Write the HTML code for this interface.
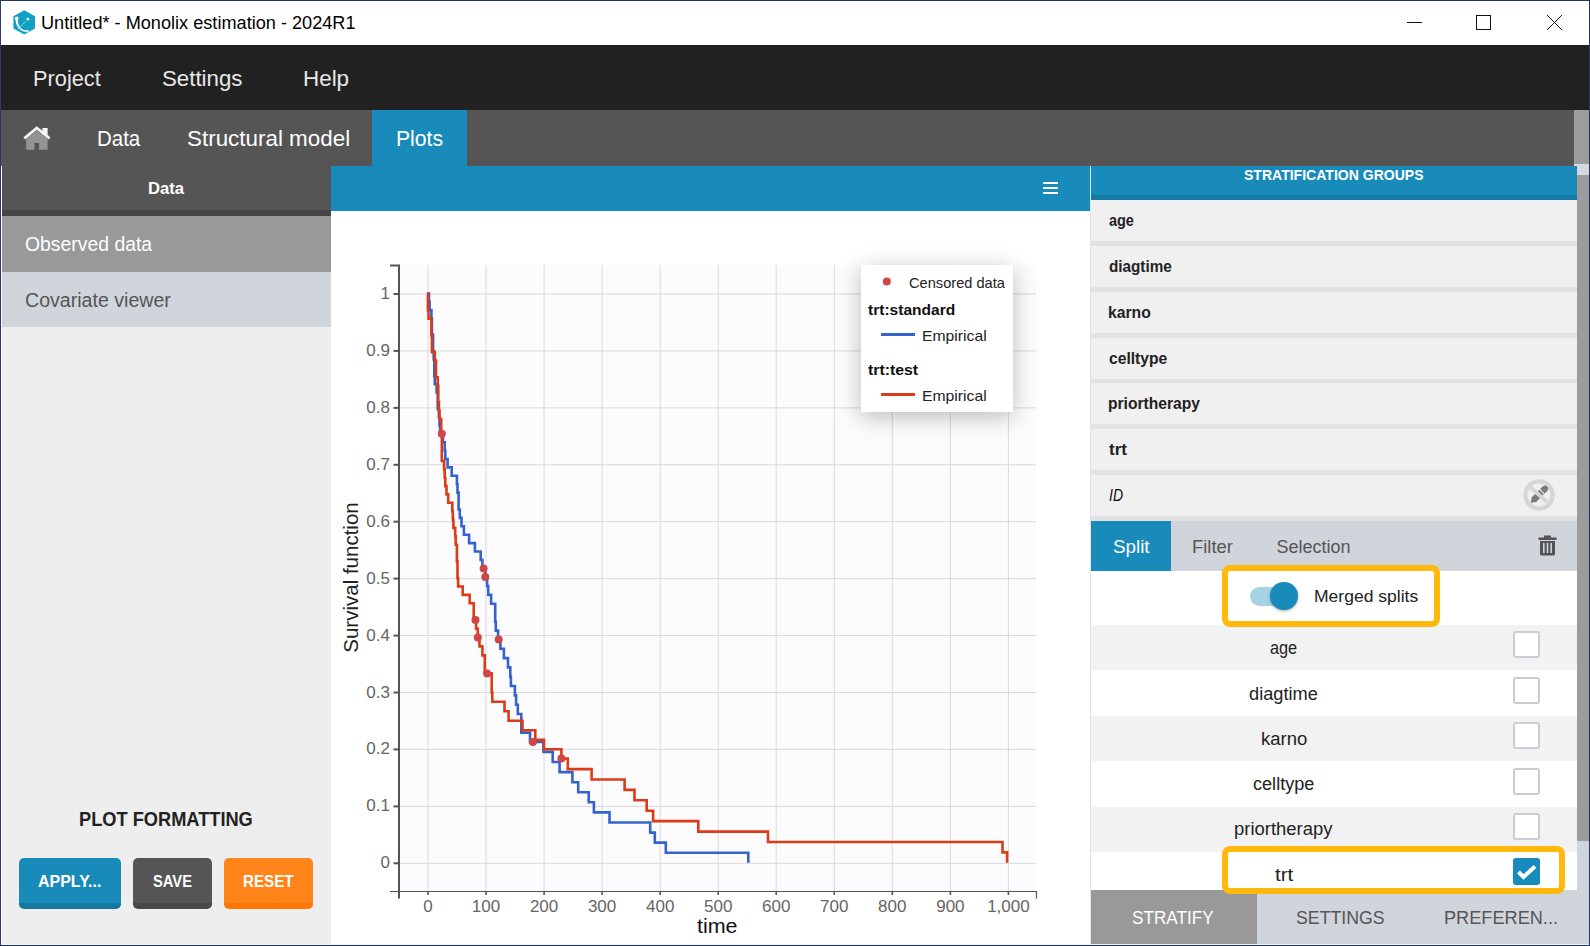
<!DOCTYPE html>
<html><head><meta charset="utf-8">
<style>
*{box-sizing:border-box}
html,body{margin:0;padding:0}
body{width:1590px;height:946px;position:relative;overflow:hidden;background:#fff;font-family:"Liberation Sans",sans-serif}
.a{position:absolute}
.t{position:absolute;white-space:nowrap;transform-origin:0 0;line-height:1}
</style></head>
<body>
<div class="a" style="left:0;top:0;width:1590px;height:1px;background:#22346a"></div>
<div class="a" style="left:0;top:0;width:1px;height:946px;background:#2a3a6a"></div>
<div class="a" style="left:1589px;top:0;width:1px;height:946px;background:#1f3468"></div>
<div class="a" style="left:0;top:945px;width:1590px;height:1px;background:#1f3468"></div>
<div class="a" style="left:1px;top:1px;width:1588px;height:44px;background:#fff"></div>
<svg class="a" style="left:13px;top:10px" width="23" height="25" viewBox="0 0 23 25">
<polygon points="11.2,0.2 22,6.3 22,18.5 11.2,24.6 0.4,18.5 0.4,6.3" fill="#0fa0c4"/>
<path d="M3.6,9.5 C3.9,14 5.5,17.5 8.5,19.7 C10.5,21 13,21.3 15.3,20.9" stroke="#fff" stroke-width="1.5" fill="none" stroke-linecap="round"/>
<path d="M2.6,9 C2.6,12 3.4,14.5 4.6,16.5 L6,15.6 C4.9,13.4 4.6,11 4.8,8.6 Z" fill="#fff"/>
<circle cx="3.7" cy="8.4" r="1.9" fill="#fff"/>
<path d="M4.8,18.9 L13,11.3" stroke="#fff" stroke-width="0.7" stroke-dasharray="1.6,0.6"/>
<circle cx="14.9" cy="9.1" r="1.4" fill="#fff"/>
</svg>
<div class="t" style="left:40.96px;top:14.99px;font-size:17.5px;font-weight:normal;font-style:normal;color:#000;transform:scaleX(1.0364);">Untitled* - Monolix estimation - 2024R1</div>
<div class="a" style="left:1407px;top:22px;width:15px;height:1px;background:#111"></div>
<div class="a" style="left:1476px;top:15px;width:15px;height:15px;border:1px solid #111"></div>
<svg class="a" style="left:1546px;top:14px" width="17" height="17" viewBox="0 0 17 17"><path d="M1,1L16,16M16,1L1,16" stroke="#111" stroke-width="1"/></svg>
<div class="a" style="left:1px;top:45px;width:1588px;height:65px;background:#212121"></div>
<div class="t" style="left:32.71px;top:67.58px;font-size:22px;font-weight:normal;font-style:normal;color:#e8e8e8;transform:scaleX(0.9897);">Project</div>
<div class="t" style="left:161.69px;top:67.58px;font-size:22px;font-weight:normal;font-style:normal;color:#e8e8e8;transform:scaleX(1.0115);">Settings</div>
<div class="t" style="left:302.58px;top:67.58px;font-size:22px;font-weight:normal;font-style:normal;color:#e8e8e8;transform:scaleX(1.0182);">Help</div>
<div class="a" style="left:1px;top:110px;width:1573px;height:56px;background:#555"></div>
<div class="a" style="left:1574px;top:110px;width:15px;height:56px;background:#9c9c9c"></div>
<svg class="a" style="left:15px;top:118px" width="45" height="40" viewBox="0 0 45 40">
<path d="M11.2,21 L21.8,12.3 L32.6,21 L32.6,31.7 L24.1,31.7 L24.1,25.1 L19.4,25.1 L19.4,31.7 L11.2,31.7 Z" fill="#939393"/>
<rect x="27.4" y="10" width="5.2" height="7" fill="#f4f4f4"/>
<path d="M9.3,20.4 L21.8,9.9 L34.6,20.4" stroke="#f4f4f4" stroke-width="2.7" fill="none"/>
</svg>
<div class="t" style="left:96.67px;top:128.38px;font-size:22px;font-weight:normal;font-style:normal;color:#fff;transform:scaleX(0.9304);">Data</div>
<div class="t" style="left:187.08px;top:128.38px;font-size:22px;font-weight:normal;font-style:normal;color:#fff;transform:scaleX(1.0184);">Structural model</div>
<div class="a" style="left:372px;top:110px;width:95px;height:56px;background:#188bba"></div>
<div class="t" style="left:395.84px;top:128.38px;font-size:22px;font-weight:normal;font-style:normal;color:#fff;transform:scaleX(0.9625);">Plots</div>
<div class="a" style="left:1px;top:166px;width:330px;height:779px;background:#eee"></div>
<div class="a" style="left:1px;top:166px;width:330px;height:44px;background:#555"></div>
<div class="a" style="left:1px;top:210px;width:330px;height:6px;background:#454545"></div>
<div class="t" style="left:147.62px;top:179.81px;font-size:17px;font-weight:bold;font-style:normal;color:#fff;transform:scaleX(0.9806);">Data</div>
<div class="a" style="left:1px;top:216px;width:330px;height:56px;background:#999"></div>
<div class="t" style="left:24.55px;top:233.65px;font-size:20.5px;font-weight:normal;font-style:normal;color:#fff;transform:scaleX(0.9455);">Observed data</div>
<div class="a" style="left:1px;top:272px;width:330px;height:55px;background:#d0d4db"></div>
<div class="t" style="left:24.52px;top:290.17px;font-size:20px;font-weight:normal;font-style:normal;color:#555;transform:scaleX(0.9791);">Covariate viewer</div>
<div class="t" style="left:79.08px;top:809.54px;font-size:19.8px;font-weight:bold;font-style:normal;color:#222;transform:scaleX(0.9214);">PLOT FORMATTING</div>
<div class="a" style="left:19px;top:858px;width:102px;height:51px;border-radius:5px;background:#188bba;border-bottom:6px solid #1478a0"></div>
<div class="t" style="left:37.90px;top:872.61px;font-size:17px;font-weight:bold;font-style:normal;color:#fff;transform:scaleX(0.9403);">APPLY...</div>
<div class="a" style="left:133px;top:858px;width:79px;height:51px;border-radius:5px;background:#555;border-bottom:6px solid #484848"></div>
<div class="t" style="left:152.70px;top:872.61px;font-size:17px;font-weight:bold;font-style:normal;color:#fff;transform:scaleX(0.8667);">SAVE</div>
<div class="a" style="left:224px;top:858px;width:89px;height:51px;border-radius:5px;background:#ff851b;border-bottom:6px solid #ff7605"></div>
<div class="t" style="left:243.01px;top:872.61px;font-size:17px;font-weight:bold;font-style:normal;color:#fff;transform:scaleX(0.8929);">RESET</div>
<div class="a" style="left:331px;top:166px;width:759px;height:45px;background:#188bba"></div>
<div class="a" style="left:1090px;top:166px;width:1px;height:779px;background:#dfe3ea"></div>
<div class="a" style="left:1043px;top:182px;width:15px;height:2px;background:#fff"></div>
<div class="a" style="left:1043px;top:187px;width:15px;height:2px;background:#fff"></div>
<div class="a" style="left:1043px;top:192px;width:15px;height:2px;background:#fff"></div>
<svg class="a" style="left:0;top:0" width="1590" height="946" viewBox="0 0 1590 946" font-family="Liberation Sans">
<rect x="400" y="265" width="636" height="626" fill="#fcfcfe"/>
<line x1="400" x2="1036" y1="863.3" y2="863.3" stroke="#d9d9dc" stroke-width="1"/>
<line x1="400" x2="1036" y1="806.4" y2="806.4" stroke="#d9d9dc" stroke-width="1"/>
<line x1="400" x2="1036" y1="749.4" y2="749.4" stroke="#d9d9dc" stroke-width="1"/>
<line x1="400" x2="1036" y1="692.5" y2="692.5" stroke="#d9d9dc" stroke-width="1"/>
<line x1="400" x2="1036" y1="635.6" y2="635.6" stroke="#d9d9dc" stroke-width="1"/>
<line x1="400" x2="1036" y1="578.6" y2="578.6" stroke="#d9d9dc" stroke-width="1"/>
<line x1="400" x2="1036" y1="521.7" y2="521.7" stroke="#d9d9dc" stroke-width="1"/>
<line x1="400" x2="1036" y1="464.8" y2="464.8" stroke="#d9d9dc" stroke-width="1"/>
<line x1="400" x2="1036" y1="407.9" y2="407.9" stroke="#d9d9dc" stroke-width="1"/>
<line x1="400" x2="1036" y1="350.9" y2="350.9" stroke="#d9d9dc" stroke-width="1"/>
<line x1="400" x2="1036" y1="294.0" y2="294.0" stroke="#d9d9dc" stroke-width="1"/>
<line x1="428.0" x2="428.0" y1="265" y2="891" stroke="#d9d9dc" stroke-width="1"/>
<line x1="486.0" x2="486.0" y1="265" y2="891" stroke="#d9d9dc" stroke-width="1"/>
<line x1="544.1" x2="544.1" y1="265" y2="891" stroke="#d9d9dc" stroke-width="1"/>
<line x1="602.1" x2="602.1" y1="265" y2="891" stroke="#d9d9dc" stroke-width="1"/>
<line x1="660.2" x2="660.2" y1="265" y2="891" stroke="#d9d9dc" stroke-width="1"/>
<line x1="718.2" x2="718.2" y1="265" y2="891" stroke="#d9d9dc" stroke-width="1"/>
<line x1="776.2" x2="776.2" y1="265" y2="891" stroke="#d9d9dc" stroke-width="1"/>
<line x1="834.3" x2="834.3" y1="265" y2="891" stroke="#d9d9dc" stroke-width="1"/>
<line x1="892.3" x2="892.3" y1="265" y2="891" stroke="#d9d9dc" stroke-width="1"/>
<line x1="950.4" x2="950.4" y1="265" y2="891" stroke="#d9d9dc" stroke-width="1"/>
<line x1="1008.4" x2="1008.4" y1="265" y2="891" stroke="#d9d9dc" stroke-width="1"/>
<path d="M390,265.5H399V898.5" stroke="#555" stroke-width="2" fill="none"/>
<path d="M390,891.5H1036.5V898.5" stroke="#555" stroke-width="1.2" fill="none"/>
<line x1="393.5" x2="399" y1="863.3" y2="863.3" stroke="#555" stroke-width="2"/>
<line x1="393.5" x2="399" y1="806.4" y2="806.4" stroke="#555" stroke-width="2"/>
<line x1="393.5" x2="399" y1="749.4" y2="749.4" stroke="#555" stroke-width="2"/>
<line x1="393.5" x2="399" y1="692.5" y2="692.5" stroke="#555" stroke-width="2"/>
<line x1="393.5" x2="399" y1="635.6" y2="635.6" stroke="#555" stroke-width="2"/>
<line x1="393.5" x2="399" y1="578.6" y2="578.6" stroke="#555" stroke-width="2"/>
<line x1="393.5" x2="399" y1="521.7" y2="521.7" stroke="#555" stroke-width="2"/>
<line x1="393.5" x2="399" y1="464.8" y2="464.8" stroke="#555" stroke-width="2"/>
<line x1="393.5" x2="399" y1="407.9" y2="407.9" stroke="#555" stroke-width="2"/>
<line x1="393.5" x2="399" y1="350.9" y2="350.9" stroke="#555" stroke-width="2"/>
<line x1="393.5" x2="399" y1="294.0" y2="294.0" stroke="#555" stroke-width="2"/>
<line x1="428.0" x2="428.0" y1="891" y2="895" stroke="#555" stroke-width="1.6"/>
<line x1="486.0" x2="486.0" y1="891" y2="895" stroke="#555" stroke-width="1.6"/>
<line x1="544.1" x2="544.1" y1="891" y2="895" stroke="#555" stroke-width="1.6"/>
<line x1="602.1" x2="602.1" y1="891" y2="895" stroke="#555" stroke-width="1.6"/>
<line x1="660.2" x2="660.2" y1="891" y2="895" stroke="#555" stroke-width="1.6"/>
<line x1="718.2" x2="718.2" y1="891" y2="895" stroke="#555" stroke-width="1.6"/>
<line x1="776.2" x2="776.2" y1="891" y2="895" stroke="#555" stroke-width="1.6"/>
<line x1="834.3" x2="834.3" y1="891" y2="895" stroke="#555" stroke-width="1.6"/>
<line x1="892.3" x2="892.3" y1="891" y2="895" stroke="#555" stroke-width="1.6"/>
<line x1="950.4" x2="950.4" y1="891" y2="895" stroke="#555" stroke-width="1.6"/>
<line x1="1008.4" x2="1008.4" y1="891" y2="895" stroke="#555" stroke-width="1.6"/>
<path d="M427.3,293.5H429.0V301.8H429.6V310.0H431.4V318.3H431.9V334.8H433.1V351.3H433.7V359.5H434.3V376.0H434.8V384.3H436.6V392.5H437.7V409.0H438.9V417.3H439.5V425.5H440.1V433.8H443.0V442.2H444.7V450.6H445.3V459.0H447.6V467.4H451.7V475.8H456.9V484.2H457.5V492.6H458.6V509.5H459.8V517.9H461.5V526.3H463.9V534.7H469.1V543.1H474.9V551.5H480.7V559.9H482.4V568.4H485.3V577.0H487.1V586.0H488.2V594.9H491.1V603.8H495.2V621.7H495.8V630.6H498.1V639.5H500.4V648.8H503.9V658.1H508.0V667.4H510.3V676.7H510.9V686.0H514.9V695.4H516.1V704.7H517.8V714.0H521.3V732.6H530.0V741.9H543.4V751.9H552.7V762.0H559.6V772.1H572.4V782.2H578.2V792.3H588.7V802.3H593.9V812.4H609.5V822.5H650.2V832.6H654.8V842.6H665.8V852.7H748.3V862.8" stroke="#3562cf" stroke-width="2.6" fill="none"/>
<path d="M427.3,293.5H427.9V310.2H428.5V318.6H431.4V335.4H431.9V352.1H434.8V360.5H436.0V377.2H437.7V385.6H438.3V402.3H438.9V410.7H439.5V419.1H441.2V435.8H441.8V460.9H444.1V469.3H444.7V477.7H445.3V486.1H446.5V494.4H448.2V502.8H452.3V511.2H452.8V519.5H453.4V527.9H455.2V536.3H455.7V544.7H456.9V561.4H457.5V578.1H458.1V586.5H462.7V594.9H469.7V603.3H473.7V620.0H476.1V628.7H477.8V637.4H479.5V646.4H482.4V655.4H484.8V673.4H491.7V692.4H492.3V701.8H504.5V711.3H508.6V720.8H522.5V730.2H535.3V739.7H544.0V749.2H561.4V758.6H567.8V769.1H591.6V779.5H624.6V789.9H634.5V800.3H646.7V810.7H653.1V821.1H698.3V831.6H768.0V842.0H1002.5V852.4H1007.1V862.8" stroke="#dc3b16" stroke-width="2.6" fill="none"/>
<circle cx="441.8" cy="433.8" r="4" fill="#d04545"/>
<circle cx="483.6" cy="568.4" r="4" fill="#d04545"/>
<circle cx="485.3" cy="577.0" r="4" fill="#d04545"/>
<circle cx="498.7" cy="639.5" r="4" fill="#d04545"/>
<circle cx="532.9" cy="741.9" r="4" fill="#d04545"/>
<circle cx="475.5" cy="620.0" r="4" fill="#d04545"/>
<circle cx="477.8" cy="637.4" r="4" fill="#d04545"/>
<circle cx="487.1" cy="673.4" r="4" fill="#d04545"/>
<circle cx="561.4" cy="758.6" r="4" fill="#d04545"/>
<text x="390" y="868.3" text-anchor="end" font-size="17" fill="#666">0</text>
<text x="390" y="811.4" text-anchor="end" font-size="17" fill="#666">0.1</text>
<text x="390" y="754.4" text-anchor="end" font-size="17" fill="#666">0.2</text>
<text x="390" y="697.5" text-anchor="end" font-size="17" fill="#666">0.3</text>
<text x="390" y="640.6" text-anchor="end" font-size="17" fill="#666">0.4</text>
<text x="390" y="583.6" text-anchor="end" font-size="17" fill="#666">0.5</text>
<text x="390" y="526.7" text-anchor="end" font-size="17" fill="#666">0.6</text>
<text x="390" y="469.8" text-anchor="end" font-size="17" fill="#666">0.7</text>
<text x="390" y="412.9" text-anchor="end" font-size="17" fill="#666">0.8</text>
<text x="390" y="355.9" text-anchor="end" font-size="17" fill="#666">0.9</text>
<text x="390" y="299.0" text-anchor="end" font-size="17" fill="#666">1</text>
<text x="428.0" y="911.5" text-anchor="middle" font-size="17" fill="#666">0</text>
<text x="486.0" y="911.5" text-anchor="middle" font-size="17" fill="#666">100</text>
<text x="544.1" y="911.5" text-anchor="middle" font-size="17" fill="#666">200</text>
<text x="602.1" y="911.5" text-anchor="middle" font-size="17" fill="#666">300</text>
<text x="660.2" y="911.5" text-anchor="middle" font-size="17" fill="#666">400</text>
<text x="718.2" y="911.5" text-anchor="middle" font-size="17" fill="#666">500</text>
<text x="776.2" y="911.5" text-anchor="middle" font-size="17" fill="#666">600</text>
<text x="834.3" y="911.5" text-anchor="middle" font-size="17" fill="#666">700</text>
<text x="892.3" y="911.5" text-anchor="middle" font-size="17" fill="#666">800</text>
<text x="950.4" y="911.5" text-anchor="middle" font-size="17" fill="#666">900</text>
<text x="1008.4" y="911.5" text-anchor="middle" font-size="17" fill="#666">1,000</text>
<text transform="translate(357.5,577.5) rotate(-90)" x="0" y="0" text-anchor="middle" font-size="20.5" fill="#222">Survival function</text>
</svg>
<div class="a" style="left:861px;top:265px;width:152px;height:147px;background:#fff;box-shadow:0 5px 22px rgba(0,0,0,0.26)"></div>
<svg class="a" style="left:880px;top:276px" width="12" height="12"><circle cx="6.8" cy="5.4" r="4" fill="#d04545"/></svg>
<div class="t" style="left:908.90px;top:274.90px;font-size:15px;font-weight:normal;font-style:normal;color:#222;transform:scaleX(0.9747);">Censored data</div>
<div class="t" style="left:868.00px;top:301.90px;font-size:15px;font-weight:bold;font-style:normal;color:#111;transform:scaleX(1.0357);">trt:standard</div>
<div class="a" style="left:881px;top:333px;width:34px;height:3px;background:#3562cf"></div>
<div class="t" style="left:921.65px;top:327.60px;font-size:15px;font-weight:normal;font-style:normal;color:#222;transform:scaleX(1.0483);">Empirical</div>
<div class="t" style="left:868.00px;top:362.10px;font-size:15px;font-weight:bold;font-style:normal;color:#111;transform:scaleX(1.0542);">trt:test</div>
<div class="a" style="left:881px;top:393px;width:34px;height:3px;background:#dc3b16"></div>
<div class="t" style="left:921.65px;top:387.60px;font-size:15px;font-weight:normal;font-style:normal;color:#222;transform:scaleX(1.0483);">Empirical</div>
<div class="t" style="left:697.40px;top:915.65px;font-size:20.5px;font-weight:normal;font-style:normal;color:#111;transform:scaleX(1.0474);">time</div>
<div class="a" style="left:1091px;top:200px;width:486px;height:321px;background:#e2e2e2"></div>
<div class="a" style="left:1091px;top:200.0px;width:486px;height:41px;background:#f0f0f0"></div>
<div class="a" style="left:1091px;top:245.8px;width:486px;height:41px;background:#f0f0f0"></div>
<div class="a" style="left:1091px;top:291.7px;width:486px;height:41px;background:#f0f0f0"></div>
<div class="a" style="left:1091px;top:337.5px;width:486px;height:41px;background:#f0f0f0"></div>
<div class="a" style="left:1091px;top:383.3px;width:486px;height:41px;background:#f0f0f0"></div>
<div class="a" style="left:1091px;top:429.1px;width:486px;height:41px;background:#f0f0f0"></div>
<div class="a" style="left:1091px;top:475.0px;width:486px;height:41px;background:#f0f0f0"></div>
<div class="t" style="left:1109.30px;top:212.96px;font-size:16px;font-weight:bold;font-style:normal;color:#222;transform:scaleX(0.9037);">age</div>
<div class="t" style="left:1109.30px;top:258.96px;font-size:16px;font-weight:bold;font-style:normal;color:#222;transform:scaleX(0.9530);">diagtime</div>
<div class="t" style="left:1108.32px;top:305.16px;font-size:16px;font-weight:bold;font-style:normal;color:#222;transform:scaleX(0.9833);">karno</div>
<div class="t" style="left:1109.30px;top:350.76px;font-size:16px;font-weight:bold;font-style:normal;color:#222;transform:scaleX(0.9774);">celltype</div>
<div class="t" style="left:1108.32px;top:396.06px;font-size:16px;font-weight:bold;font-style:normal;color:#222;transform:scaleX(0.9763);">priortherapy</div>
<div class="t" style="left:1109.30px;top:442.06px;font-size:16px;font-weight:bold;font-style:normal;color:#222;transform:scaleX(1.0706);">trt</div>
<div class="t" style="left:1109.30px;top:487.61px;font-size:15.7px;font-weight:normal;font-style:italic;color:#111;transform:scaleX(0.8933);">ID</div>
<svg class="a" style="left:1522px;top:478px" width="34" height="34" viewBox="0 0 34 34">
<circle cx="17" cy="17" r="13.6" fill="none" stroke="#d6d6d6" stroke-width="4.4"/>
<path d="M8.8,24.8 L9.72,19.36 L20.68,8.4 A3.2,3.2 0 0 1 25.2,12.92 L14.24,23.88 Z" fill="#7b7b7b"/>
<path d="M17.0,10.7 L22.9,16.6" stroke="#f0f0f0" stroke-width="1.2"/>
<path d="M7.6,8.4 L25,24" stroke="#d6d6d6" stroke-width="4"/>
</svg>
<div class="a" style="left:1091px;top:166px;width:486px;height:34px;background:#188bba"></div>
<div class="a" style="left:1091px;top:195px;width:486px;height:5px;background:#147aa6"></div>
<div class="t" style="left:1244.40px;top:167.26px;font-size:15.4px;font-weight:bold;font-style:normal;color:#fff;transform:scaleX(0.9117);">STRATIFICATION GROUPS</div>
<div class="a" style="left:1574px;top:164px;width:15px;height:11px;background:#d5d8de"></div>
<div class="a" style="left:1574px;top:166px;width:3px;height:9px;background:#188bba"></div>
<div class="a" style="left:1577px;top:175px;width:12px;height:666px;background:#9c9c9c"></div>
<div class="a" style="left:1577px;top:841px;width:12px;height:104px;background:#d0d4db"></div>
<div class="a" style="left:1091px;top:521px;width:486px;height:50px;background:#d0d4db"></div>
<div class="a" style="left:1091px;top:521px;width:80px;height:50px;background:#188bba"></div>
<div class="t" style="left:1112.86px;top:537.86px;font-size:18px;font-weight:normal;font-style:normal;color:#fff;transform:scaleX(1.0441);">Split</div>
<div class="t" style="left:1192.48px;top:537.86px;font-size:18px;font-weight:normal;font-style:normal;color:#555;transform:scaleX(1.0205);">Filter</div>
<div class="t" style="left:1276.40px;top:537.86px;font-size:18px;font-weight:normal;font-style:normal;color:#555;">Selection</div>
<svg class="a" style="left:1538px;top:535px" width="19" height="21" viewBox="0 0 19 21">
<rect x="0.5" y="2.5" width="18" height="2.5" fill="#555"/><rect x="6" y="0.5" width="7" height="2.5" fill="#555"/>
<path d="M2,6 H17 V19 Q17,20.5 15.5,20.5 H3.5 Q2,20.5 2,19 Z" fill="#555"/>
<rect x="5" y="8" width="1.6" height="10" fill="#d0d4db"/><rect x="8.7" y="8" width="1.6" height="10" fill="#d0d4db"/><rect x="12.4" y="8" width="1.6" height="10" fill="#d0d4db"/>
</svg>
<div class="a" style="left:1091px;top:571px;width:486px;height:54px;background:#fff"></div>
<div class="a" style="left:1250px;top:587px;width:44px;height:19px;border-radius:10px;background:#a5d3e3"></div>
<div class="a" style="left:1270px;top:582px;width:28px;height:28px;border-radius:50%;background:#188bba;box-shadow:0 1px 3px rgba(0,0,0,0.35)"></div>
<div class="t" style="left:1313.84px;top:588.33px;font-size:16.5px;font-weight:normal;font-style:normal;color:#222;transform:scaleX(1.0619);">Merged splits</div>
<div class="a" style="left:1091px;top:625px;width:486px;height:45.4px;background:#f2f2f2"></div>
<div class="t" style="left:1270.10px;top:640.39px;font-size:17.5px;font-weight:normal;font-style:normal;color:#222;transform:scaleX(0.9310);">age</div>
<div class="a" style="left:1513px;top:631.3px;width:27px;height:27px;border-radius:3px;background:#fff;border:2px solid #c9ced6"></div>
<div class="a" style="left:1091px;top:670.4px;width:486px;height:45.4px;background:#fff"></div>
<div class="t" style="left:1249.20px;top:685.89px;font-size:17.5px;font-weight:normal;font-style:normal;color:#222;transform:scaleX(1.0424);">diagtime</div>
<div class="a" style="left:1513px;top:676.7px;width:27px;height:27px;border-radius:3px;background:#fff;border:2px solid #c9ced6"></div>
<div class="a" style="left:1091px;top:715.8px;width:486px;height:45.4px;background:#f2f2f2"></div>
<div class="t" style="left:1260.54px;top:730.89px;font-size:17.5px;font-weight:normal;font-style:normal;color:#222;transform:scaleX(1.0571);">karno</div>
<div class="a" style="left:1513px;top:722.1px;width:27px;height:27px;border-radius:3px;background:#fff;border:2px solid #c9ced6"></div>
<div class="a" style="left:1091px;top:761.2px;width:486px;height:45.4px;background:#fff"></div>
<div class="t" style="left:1253.30px;top:775.89px;font-size:17.5px;font-weight:normal;font-style:normal;color:#222;transform:scaleX(1.0339);">celltype</div>
<div class="a" style="left:1513px;top:767.5px;width:27px;height:27px;border-radius:3px;background:#fff;border:2px solid #c9ced6"></div>
<div class="a" style="left:1091px;top:806.6px;width:486px;height:45.4px;background:#f2f2f2"></div>
<div class="t" style="left:1233.75px;top:821.39px;font-size:17.5px;font-weight:normal;font-style:normal;color:#222;transform:scaleX(1.0538);">priortherapy</div>
<div class="a" style="left:1513px;top:812.9px;width:27px;height:27px;border-radius:3px;background:#fff;border:2px solid #c9ced6"></div>
<div class="a" style="left:1091px;top:852px;width:486px;height:38.0px;background:#fff"></div>
<div class="t" style="left:1274.50px;top:866.89px;font-size:17.5px;font-weight:normal;font-style:normal;color:#222;transform:scaleX(1.1750);">trt</div>
<div class="a" style="left:1513px;top:857.5px;width:27px;height:27.5px;border-radius:3px;background:#188bba"></div>
<svg class="a" style="left:1513px;top:858px" width="27" height="27" viewBox="0 0 27 27"><path d="M5.5,14 L10.5,19 L22,8.5" stroke="#fff" stroke-width="4" fill="none" stroke-linecap="butt"/></svg>
<div class="a" style="left:1091px;top:890px;width:486px;height:55px;background:#d0d4db"></div>
<div class="a" style="left:1091px;top:890px;width:166px;height:55px;background:#999"></div>
<div class="t" style="left:1132.40px;top:907.92px;font-size:19px;font-weight:normal;font-style:normal;color:#fff;transform:scaleX(0.9022);">STRATIFY</div>
<div class="t" style="left:1295.87px;top:907.92px;font-size:19px;font-weight:normal;font-style:normal;color:#555;transform:scaleX(0.9323);">SETTINGS</div>
<div class="t" style="left:1443.84px;top:907.92px;font-size:19px;font-weight:normal;font-style:normal;color:#555;transform:scaleX(0.9556);">PREFEREN...</div>
<div class="a" style="left:1222px;top:564.5px;width:217.5px;height:62px;border:6px solid #ffb80c;border-radius:8px"></div>
<div class="a" style="left:1222px;top:846.3px;width:342.5px;height:47.5px;border:6px solid #ffb80c;border-radius:8px"></div>
<div class="a" style="left:1px;top:166px;width:1px;height:779px;background:#fff"></div>
<div class="a" style="left:1px;top:944px;width:1588px;height:1px;background:#f4f4f6"></div>
</body></html>
